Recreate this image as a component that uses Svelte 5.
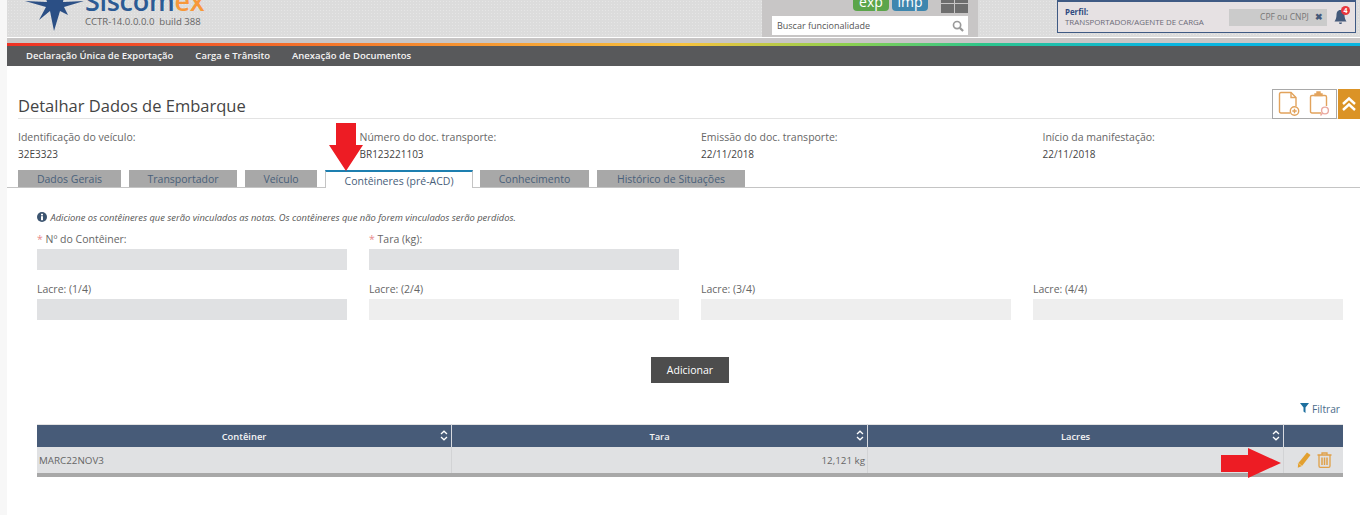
<script lang="ts">
	const nav = ['Declaração Única de Exportação', 'Carga e Trânsito', 'Anexação de Documentos'];
	const infos = [
		{ label: 'Identificação do veículo:', value: '32E3323' },
		{ label: 'Número do doc. transporte:', value: 'BR123221103' },
		{ label: 'Emissão do doc. transporte:', value: '22/11/2018' },
		{ label: 'Início da manifestação:', value: '22/11/2018' }
	];
	const tabs = [
		{ name: 'Dados Gerais', width: 103 },
		{ name: 'Transportador', width: 108 },
		{ name: 'Veículo', width: 72 },
		{ name: 'Contêineres (pré-ACD)', width: 148, active: true },
		{ name: 'Conhecimento', width: 109 },
		{ name: 'Histórico de Situações', width: 148 }
	];
	const lacres = ['Lacre: (1/4)', 'Lacre: (2/4)', 'Lacre: (3/4)', 'Lacre: (4/4)'];
</script>

<div class="page">
	<header class="top">
		<div class="brand">
			<svg class="star" width="70" height="36" viewBox="0 0 70 36">
				<path d="M33 -14 L37 -2 L43 -8 L41 2 L62 1 L42 7 L46 15 L38 11 L32 31 L28 11 L17 20 L24 7 L3 1 L25 2 L22 -8 L29 -2 Z" fill="#2b4f85" />
			</svg>
			<div class="brand-text">
				<div class="wordmark">Siscom<span>ex</span></div>
				<div class="build">CCTR-14.0.0.0.0&nbsp; build 388</div>
			</div>
		</div>
		<div class="search-panel">
			<div class="panel-top">
				<span class="pill exp">exp</span>
				<span class="pill imp">imp</span>
				<span class="grid-icon"><i></i><i></i><i></i><i></i></span>
			</div>
			<div class="search">
				<span>Buscar funcionalidade</span>
				<svg width="12" height="12" viewBox="0 0 13 13" fill="none" stroke="#9a9a9a" stroke-width="1.8">
					<circle cx="5.5" cy="5.5" r="3.9" />
					<path d="M8.5 8.5 L12 12" stroke-width="2.4" />
				</svg>
			</div>
		</div>
		<div class="profile">
			<div class="profile-text">
				<b>Perfil:</b>
				<span>TRANSPORTADOR/AGENTE DE CARGA</span>
			</div>
			<div class="cpf">CPF ou CNPJ <b>✖</b></div>
			<span class="bell">
				<svg width="13" height="16" viewBox="0 0 13 16">
					<path d="M6.5 1 C3.5 1 2.5 3.5 2.5 6 C2.5 9 1.6 11 0.5 12.5 L12.5 12.5 C11.4 11 10.5 9 10.5 6 C10.5 3.5 9.5 1 6.5 1 Z M5 13.5 H8 C8 15.5 5 15.5 5 13.5 Z" fill="#44597a" />
				</svg>
				<em>4</em>
			</span>
		</div>
	</header>
	<div class="gradient-band"></div>
	<nav class="menu">
		{#each nav as item}
			<span>{item}</span>
		{/each}
	</nav>

	<main class="content">
		<div class="title-row">
			<h1>Detalhar Dados de Embarque</h1>
			<div class="actions">
				<div class="action-box">
					<svg width="22" height="26" viewBox="0 0 22 26" fill="none" stroke="#e2a35c" stroke-width="1.4">
						<path d="M12 22 H3 Q1.500 22 1.500 20.500 V3 Q1.500 1.500 3 1.500 H13 L18 6.500 V15" />
						<path d="M13 1.500 V6.500 H18" />
						<circle cx="16.500" cy="20" r="4.200" />
						<path d="M14.300 20 H18.700 M16.500 17.800 V22.200" />
					</svg>
					<svg width="22" height="26" viewBox="0 0 22 26" fill="none" stroke="#e2a35c" stroke-width="1.4">
						<path d="M12 22 H3 Q1.500 22 1.500 20.500 V6 Q1.500 4.500 3 4.500 H16 Q17.500 4.500 17.500 6 V15" />
						<path d="M6 4.500 V3 H8 V1 H11 V3 H13 V4.500 Z" fill="#e2a35c" />
						<circle cx="16" cy="19.500" r="3.400" stroke="#eaa9a0" />
						<path d="M13.500 22 L11.500 24.500" stroke="#eaa9a0" />
					</svg>
				</div>
				<div class="collapse">
					<svg width="16" height="16" viewBox="0 0 16 16" fill="none" stroke="#fff" stroke-width="2.400">
						<path d="M2 8 L8 2.500 L14 8 M2 14 L8 8.500 L14 14" />
					</svg>
				</div>
			</div>
		</div>

		<div class="info-row">
			{#each infos as info}
				<div class="info">
					<span>{info.label}</span>
					<strong>{info.value}</strong>
				</div>
			{/each}
		</div>

		<div class="tabs">
			{#each tabs as tab}
				<div class="tab" class:active={tab.active} style="width: {tab.width}px">{tab.name}</div>
			{/each}
		</div>

		<section class="panel">
			<p class="hint">
				<svg width="10" height="10" viewBox="0 0 10 10">
					<circle cx="5" cy="5" r="5" fill="#3c5470" />
					<rect x="4" y="4.200" width="2" height="4" fill="#fff" />
					<rect x="4" y="1.800" width="2" height="1.600" fill="#fff" />
				</svg>
				Adicione os contêineres que serão vinculados as notas. Os contêineres que não forem vinculados serão perdidos.
			</p>

			<div class="fields">
				<label class="field">
					<span><i>*</i> Nº do Contêiner:</span>
					<div class="input"></div>
				</label>
				<label class="field">
					<span><i>*</i> Tara (kg):</span>
					<div class="input"></div>
				</label>
				<div></div>
				<div></div>
				{#each lacres as lacre, i}
					<label class="field">
						<span>{lacre}</span>
						<div class="input" class:light={i > 0}></div>
					</label>
				{/each}
			</div>

			<div class="submit-row">
				<button type="button">Adicionar</button>
			</div>

			<div class="filter-row">
				<svg width="9" height="10" viewBox="0 0 9 10"><path d="M0 0 H9 L5.500 4.500 V10 L3.500 8.500 V4.500 Z" fill="#1d6f9e" /></svg>
				Filtrar
			</div>

			<table>
				<thead>
					<tr>
						<th class="c1">Contêiner<svg class="sort" width="8" height="11" viewBox="0 0 8 11" fill="none" stroke="#fff" stroke-width="1.300"><path d="M1 4 L4 1.200 L7 4 M1 7 L4 9.800 L7 7" /></svg></th>
						<th class="c2">Tara<svg class="sort" width="8" height="11" viewBox="0 0 8 11" fill="none" stroke="#fff" stroke-width="1.300"><path d="M1 4 L4 1.200 L7 4 M1 7 L4 9.800 L7 7" /></svg></th>
						<th class="c3">Lacres<svg class="sort" width="8" height="11" viewBox="0 0 8 11" fill="none" stroke="#fff" stroke-width="1.300"><path d="M1 4 L4 1.200 L7 4 M1 7 L4 9.800 L7 7" /></svg></th>
						<th class="c4"></th>
					</tr>
				</thead>
				<tbody>
					<tr>
						<td>MARC22NOV3</td>
						<td class="num">12,121 kg</td>
						<td></td>
						<td class="row-actions">
							<svg width="14" height="16" viewBox="0 0 14 16">
								<path d="M10 0.500 L13.500 3 L5 14 L0.800 15.800 L1.200 11.200 Z" fill="#e2a030" />
								<path d="M1.200 11.200 L5 14" stroke="#f4d9a6" stroke-width="0.700" />
							</svg>
							<svg class="trash" width="15" height="16" viewBox="0 0 15 16" fill="none" stroke="#e0a048" stroke-width="1.300">
								<path d="M0.500 3 H14.500 M5 3 V1 H10 V3" />
								<path d="M2 3 V14 Q2 15.300 3.300 15.300 H11.700 Q13 15.300 13 14 V3" />
								<path d="M5 5.500 V13 M7.500 5.500 V13 M10 5.500 V13" stroke-width="1.500" />
							</svg>
						</td>
					</tr>
				</tbody>
			</table>
		</section>
	</main>

	<!-- red annotations pasted over the screenshot -->
	<svg class="arrow arrow-down" width="34" height="48" viewBox="0 0 34 48">
		<path d="M7 0 H27 V22 H34 L17 48 L0 22 H7 Z" fill="#ed1c24" />
	</svg>
	<svg class="arrow arrow-right" width="60" height="30" viewBox="0 0 60 30">
		<path d="M0 7 H27 V0 L60 15 L27 30 V24 H0 Z" fill="#ed1c24" />
	</svg>
</div>

<style>
	:global(body) {
		margin: 0;
		background: #f7f7f7;
		font-family: 'Open Sans', 'Noto Sans', sans-serif;
		overflow: hidden;
	}
	.page {
		position: relative;
		margin-left: 7px;
		height: 515px;
		background: #fff;
		overflow: hidden;
		color: #444;
	}

	.top {
		height: 37px;
		display: flex;
		overflow: hidden;
		background-color: #dcdcdc;
		background-image: radial-gradient(#e6e6e6 1px, transparent 1px);
		background-size: 3px 3px;
	}
	.brand {
		display: flex;
		width: 740px;
		margin-left: 15px;
	}
	.star {
		flex: none;
	}
	.brand-text {
		margin-left: -7px;
		margin-top: -14px;
	}
	.wordmark {
		font-size: 27px;
		line-height: 30px;
		font-weight: 600;
		letter-spacing: -0.3px;
		color: #2b5a94;
	}
	.wordmark span {
		color: #f7983a;
	}
	.build {
		margin-top: -1px;
		font-size: 9.600px;
		line-height: 14px;
		color: #666;
	}
	.search-panel {
		width: 216px;
		background: #c8c6c6;
		padding: 0 10px;
		box-sizing: border-box;
	}
	.panel-top {
		height: 16px;
		display: flex;
		justify-content: flex-end;
		gap: 3px;
		overflow: hidden;
	}
	.pill {
		width: 36px;
		height: 11px;
		border-radius: 0 0 4px 4px;
		color: #fff;
		font-size: 14px;
		line-height: 3px;
		text-align: center;
	}
	.exp {
		background: #5ba54a;
	}
	.imp {
		background: #3e86ae;
	}
	.grid-icon {
		margin-left: 10px;
		width: 27px;
		height: 13px;
		display: grid;
		grid-template-columns: 1fr 1fr;
		grid-template-rows: 3px 1fr;
		gap: 1px;
	}
	.grid-icon i {
		background: #6e6e6e;
	}
	.search {
		height: 19px;
		background: #fff;
		display: flex;
		align-items: center;
		justify-content: space-between;
		padding: 0 4px 0 5px;
		font-size: 9px;
		color: #555;
	}
	.profile {
		width: 299px;
		height: 33px;
		margin-left: 79px;
		box-sizing: border-box;
		border: 1px solid #3f5a84;
		border-top: 2px solid #3f5a84;
		background: linear-gradient(#86b13c, #86b13c) no-repeat -1px -2px / 24px 2px #e6e1e3;
		background-origin: border-box;
		display: flex;
		align-items: center;
	}
	.profile-text {
		margin-left: 7px;
		width: 140px;
		display: flex;
		flex-direction: column;
		font-size: 7.900px;
		line-height: 10px;
		white-space: nowrap;
		color: #6b6b78;
	}
	.profile-text b {
		color: #2f4a80;
	}
	.cpf {
		margin-left: 24px;
		width: 98px;
		height: 17px;
		box-sizing: border-box;
		padding-right: 4px;
		background: #cbcbcb;
		font-size: 8.500px;
		line-height: 16px;
		text-align: right;
		color: #777;
	}
	.cpf b {
		color: #44597a;
		margin-left: 4px;
	}
	.bell {
		position: relative;
		margin-left: 7px;
		margin-top: 3px;
	}
	.bell em {
		position: absolute;
		top: -2px;
		right: -3px;
		width: 9px;
		height: 9px;
		border-radius: 50%;
		background: #e8363c;
		color: #fff;
		font-size: 7px;
		font-style: normal;
		font-weight: 700;
		line-height: 9px;
		text-align: center;
	}

	.gradient-band {
		margin-top: 1px;
		height: 8px;
		box-sizing: border-box;
		border-top: 5px solid #c8c6c6;
		background: linear-gradient(90deg, #ee3124, #f47a2b 25%, #f7c23d 50%, #8ed04f 62%, #2ec68a 72%, #09b5e0 85%, #09b5e0);
	}
	.menu {
		height: 20px;
		display: flex;
		gap: 22px;
		padding-left: 19px;
		background: #58595b;
		font-size: 9.500px;
		font-weight: 600;
		line-height: 20px;
	}
	.menu span {
		color: #f4f4f4;
	}

	.content {
		padding-top: 24px;
	}
	.title-row {
		position: relative;
		margin-left: 11px;
		height: 28px;
		border-bottom: 1px solid #e3e3e3;
	}
	h1 {
		margin: 0;
		font-size: 16.500px;
		font-weight: 400;
		line-height: 32px;
		color: #444;
	}
	.actions {
		position: absolute;
		right: 0;
		top: -1px;
		display: flex;
	}
	.action-box {
		width: 65px;
		height: 30px;
		box-sizing: border-box;
		border: 1px solid #a9a9a9;
		display: flex;
		align-items: center;
		justify-content: center;
		gap: 9px;
	}
	.collapse {
		width: 22px;
		height: 30px;
		margin-left: 1px;
		background: #db9326;
		display: flex;
		align-items: center;
		justify-content: center;
	}

	.info-row {
		display: grid;
		grid-template-columns: repeat(4, 341.500px);
		margin: 11px 0 0 11px;
	}
	.info {
		display: flex;
		flex-direction: column;
		gap: 3px;
		font-size: 10.500px;
		line-height: 14px;
	}
	.info span {
		color: #666;
	}
	.info strong {
		font-size: 10px;
		font-weight: 400;
		color: #444;
	}

	.tabs {
		display: flex;
		gap: 8px;
		margin-top: 9px;
		padding-left: 11px;
		height: 18px;
		box-sizing: border-box;
		border-bottom: 1px solid #c4c4c4;
	}
	.tab {
		height: 17px;
		background: #a8a8a8;
		font-size: 10.500px;
		line-height: 18px;
		text-align: center;
		color: #48607a;
	}
	.tab.active {
		height: 18px;
		margin-right: -1px;
		box-sizing: border-box;
		background: #fff;
		border: 1px solid #c4c4c4;
		border-top: 2px solid #1d7fb0;
		border-bottom: 0;
		line-height: 19px;
	}

	.panel {
		padding: 0 19px 0 30px;
	}
	.hint {
		margin: 24px 0 0;
		font-size: 9.370px;
		font-style: italic;
		line-height: 12px;
		color: #555;
	}
	.hint svg {
		margin-right: 1px;
		vertical-align: -1px;
	}
	.fields {
		display: grid;
		grid-template-columns: repeat(4, 310px);
		column-gap: 22px;
		row-gap: 12px;
		margin-top: 8px;
	}
	.field {
		display: block;
	}
	.field span {
		display: block;
		height: 17px;
		font-size: 10.500px;
		line-height: 14px;
		color: #666;
	}
	.field i {
		color: #e88a8a;
		font-style: normal;
	}
	.input {
		height: 21px;
		background: #e0e1e3;
	}
	.input.light {
		background: #eeeeee;
	}
	.submit-row {
		display: flex;
		justify-content: center;
		margin: 37px 0 0 2px;
	}
	button {
		width: 78px;
		height: 26px;
		border: 0;
		background: #4d4d4d;
		color: #fff;
		font: inherit;
		font-size: 10.500px;
		padding: 0;
	}
	.filter-row {
		margin-top: 19px;
		margin-right: 1px;
		height: 14px;
		text-align: right;
		font-size: 10.200px;
		line-height: 14px;
		color: #4a6b8a;
	}
	table {
		margin-top: 8px;
		width: 1306px;
		border-collapse: collapse;
		table-layout: fixed;
		border-top: 1px solid #e3e3e3;
		border-bottom: 4px solid #a8a8a8;
		font-size: 9.800px;
	}
	thead th {
		position: relative;
		height: 22px;
		padding: 0;
		background: #475b78;
		border-right: 1px solid #d7dae0;
		color: #f4f4f4;
		font-size: 9.400px;
		font-weight: 600;
	}
	th:last-child {
		border-right: 0;
	}
	.c1 {
		width: 414px;
	}
	.c2 {
		width: 415px;
	}
	.c3 {
		width: 415px;
	}
	.sort {
		position: absolute;
		right: 3px;
		top: 5px;
	}
	td {
		height: 26px;
		padding: 0 2px;
		background: #e0e1e3;
		border-right: 1px solid #d2d3d5;
		color: #666;
	}
	td:last-child {
		border-right: 0;
	}
	.num {
		text-align: right;
	}
	.row-actions {
		padding: 0 0 0 13px;
	}
	.row-actions svg {
		vertical-align: middle;
	}
	.row-actions .trash {
		margin-left: 3px;
	}

	.arrow {
		position: absolute;
	}
	.arrow-down {
		left: 322px;
		top: 123px;
	}
	.arrow-right {
		left: 1214px;
		top: 448px;
	}
</style>
